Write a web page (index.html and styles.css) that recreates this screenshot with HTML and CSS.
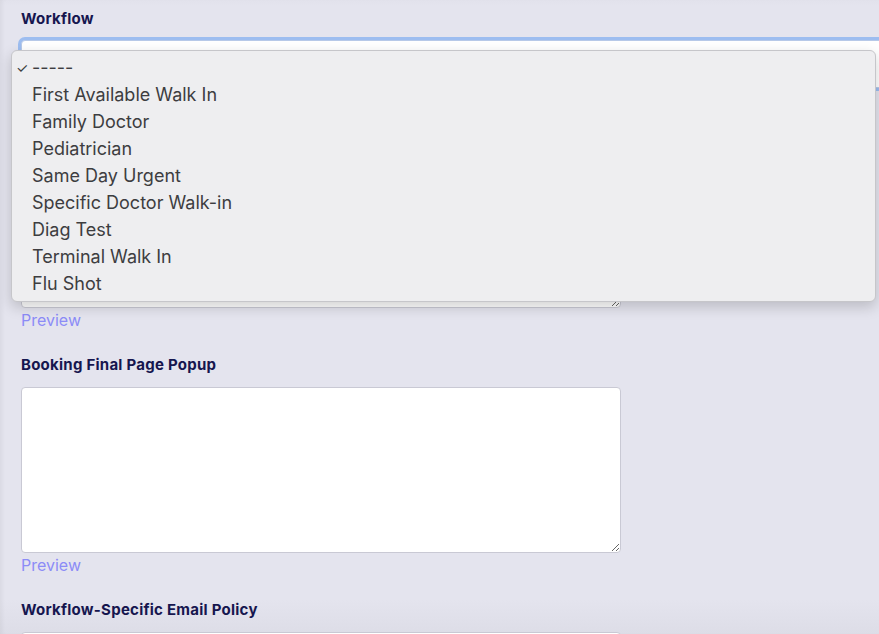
FILE: index.html
```html
<!DOCTYPE html>
<html lang="en">
<head>
<meta charset="utf-8">
<title>Workflow</title>
<link rel="stylesheet" href="styles.css">
</head>
<body>
<div class="page">
  <div class="field">
    <label class="label first">Workflow</label>
    <div class="select focused"></div>
  </div>
  <div class="field">
    <span class="label gap-select spacer"></span>
    <textarea class="textarea"></textarea>
    <a class="preview">Preview</a>
  </div>
  <div class="field">
    <label class="label">Booking Final Page Popup</label>
    <textarea class="textarea"></textarea>
    <a class="preview">Preview</a>
  </div>
  <div class="field">
    <label class="label">Workflow-Specific Email Policy</label>
    <textarea class="textarea"></textarea>
  </div>
</div>
<ul class="menu">
  <li class="item selected"><span class="check">✓</span>-----</li>
  <li class="item">First Available Walk In</li>
  <li class="item">Family Doctor</li>
  <li class="item">Pediatrician</li>
  <li class="item">Same Day Urgent</li>
  <li class="item">Specific Doctor Walk-in</li>
  <li class="item">Diag Test</li>
  <li class="item">Terminal Walk In</li>
  <li class="item">Flu Shot</li>
</ul>
</body>
</html>
```
FILE: styles.css
```css
html, body {
  margin: 0;
  padding: 0;
  height: 100%;
  overflow: hidden;
}
body {
  background: linear-gradient(to bottom, #e2e2ec 0px, #e4e4ee 6px, #e4e4ee 600px, #dddde7 634px);
  font-family: "Inter", "Liberation Sans", sans-serif;
  position: relative;
  box-shadow: inset 4px 0 4px -2px rgba(0, 0, 0, 0.05);
}
.page {
  padding: 0 0 0 21px;
}
.field {
  display: flex;
  flex-direction: column;
  align-items: flex-start;
}
.label {
  display: block;
  font-size: 15px;
  line-height: 20px;
  font-weight: 700;
  letter-spacing: 0.25px;
  color: #16164f;
  margin-top: 24px;
  padding-top: 1px;
}
.label.first {
  margin-top: 8px;
}
.label.gap-select {
  margin-top: 21px;
}
.spacer {
  height: 20px;
}
.select {
  margin-top: 11px;
  width: 880px;
  height: 48px;
  box-sizing: border-box;
  background: #fff;
  border: 1px solid #b7c9e8;
  border-radius: 4px;
}
.select.focused {
  box-shadow: 0 0 0 3px #9dbdf0;
}
.textarea {
  margin-top: 12px;
  width: 600px;
  height: 166px;
  box-sizing: border-box;
  background: #fff;
  border: 1px solid #c9c9d4;
  border-radius: 4px;
  padding: 6px;
  font: inherit;
  display: block;
}
.preview {
  margin-top: 3px;
  font-size: 16px;
  line-height: 19px;
  color: #8c8cf7;
  cursor: pointer;
}
.menu {
  position: absolute;
  left: 11px;
  top: 50px;
  width: 865px;
  height: 252px;
  box-sizing: border-box;
  margin: 0;
  padding: 3px 0 0 0;
  list-style: none;
  background: #eeeef0;
  border: 1px solid #c6c6ca;
  border-radius: 6px;
  box-shadow: 0 5px 14px rgba(0, 0, 0, 0.18);
}
.item {
  position: relative;
  padding-left: 20px;
  font-family: "Inter", "Liberation Sans", sans-serif;
  font-size: 18px;
  line-height: 27px;
  color: #3d3d40;
}
.check {
  position: absolute;
  left: 4px;
  top: 0;
  font-size: 14px;
  color: #3d3d40;
}
```
